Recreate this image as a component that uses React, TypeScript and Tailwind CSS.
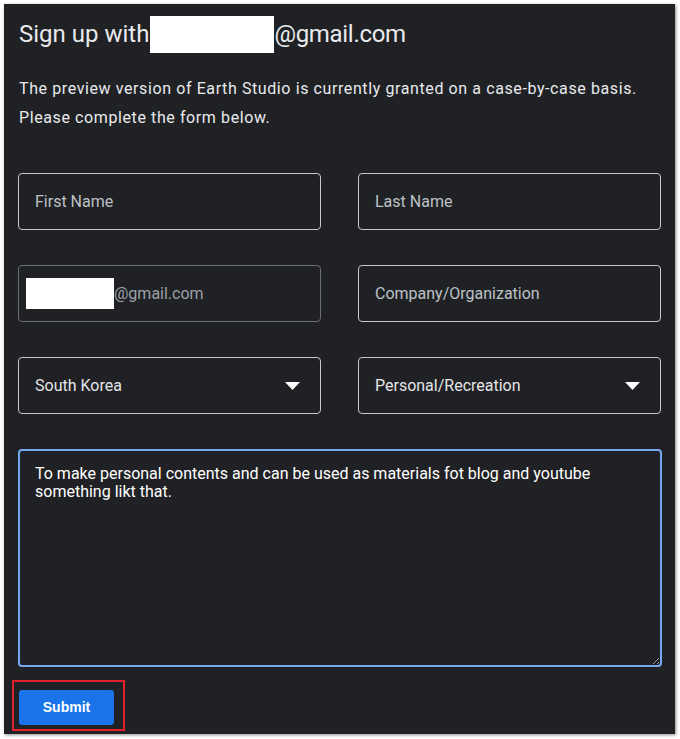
import React from "react";

function Field({ label }: { label: string }) {
  return (
    <div className="flex h-[57px] items-center rounded-[4px] border border-[#c6c8cc] px-4">
      <span className="text-[16px] text-[#bdc1c6]">{label}</span>
    </div>
  );
}

function Select({ label }: { label: string }) {
  return (
    <div className="flex h-[57px] items-center justify-between rounded-[4px] border border-[#c6c8cc] pl-4 pr-[20px]">
      <span className="text-[16px] text-[#e3e5e8]">{label}</span>
      <svg width="15" height="8" viewBox="0 0 15 8">
        <path d="M0 0 L15 0 L7.5 8 Z" fill="#ffffff" />
      </svg>
    </div>
  );
}

export default function App() {
  return (
    <div className="min-h-[739px] w-[680px] bg-white pl-[4px] pt-[4px]" style={{ fontFamily: "Roboto, 'Noto Sans', sans-serif" }}>
      <div className="flex h-[730px] w-[671px] flex-col bg-[#202124] px-[14px] pt-[10px] shadow-[1px_1px_3px_rgba(0,0,0,0.45)]">
        <h1 className="flex h-[40px] items-center pl-[1px] text-[24px] leading-[32px] text-[#e8eaed]">
          <span>Sign up with</span>
          <span className="ml-[1px] inline-block h-[37px] w-[124px] bg-white" />
          <span className="tracking-[-0.3px]">@gmail.com</span>
        </h1>
        <div className="mt-[20px] pl-[1px] text-[16px] leading-[29px] tracking-[0.6px] text-[#e8eaed]">
          <p>The preview version of Earth Studio is currently granted on a case-by-case basis.</p>
          <p>Please complete the form below.</p>
        </div>
        <div className="mt-[41px] grid grid-cols-2 gap-x-[37px] gap-y-[35px]">
          <Field label="First Name" />
          <Field label="Last Name" />
          <div className="flex h-[57px] items-center rounded-[4px] border border-[#6b6e72] pl-[7px]">
            <span className="inline-block h-[31px] w-[88px] bg-white" />
            <span className="text-[16px] text-[#9aa0a6]">@gmail.com</span>
          </div>
          <Field label="Company/Organization" />
          <Select label="South Korea" />
          <Select label="Personal/Recreation" />
        </div>
        <div className="mt-[35px]">
          <textarea
            readOnly
            defaultValue="To make personal contents and can be used as materials fot blog and youtube something likt that."
            className="block h-[218px] w-[644px] rounded-[4px] border-2 border-[#78a9f0] bg-[#202124] px-[15px] pt-[14px] text-[16px] leading-[18px] text-[#ffffff] outline-none"
            style={{ fontFamily: "Roboto, sans-serif" }}
          />
        </div>
        <div className="relative mt-[23px] pl-[1px]">
          <div className="pointer-events-none absolute left-[-6px] top-[-10px] h-[51px] w-[113px] border-2 border-[#e3202b]" />
          <button
            className="h-[35px] w-[95px] rounded-[3px] bg-[#1a73e8] text-[14px] font-bold text-white"
            style={{ fontFamily: "'Liberation Sans', Arial, sans-serif" }}
          >
            Submit
          </button>
        </div>
      </div>
    </div>
  );
}
